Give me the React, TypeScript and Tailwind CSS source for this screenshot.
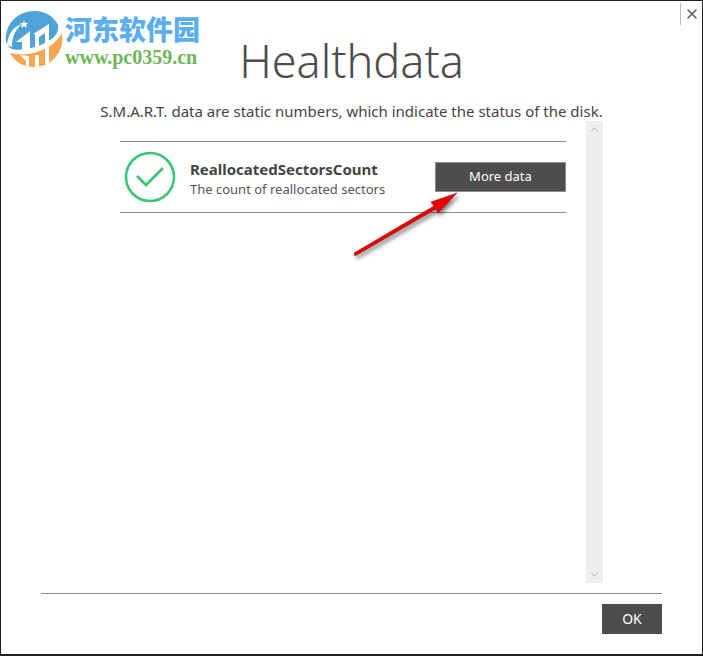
import React from "react";
import { X, ChevronUp, ChevronDown } from "lucide-react";

const SiteLogo = () => {
    return (
        <svg viewBox="0 0 60 60" className="h-[60px] w-[60px] shrink-0" aria-hidden="true">
            <path d="M1 33 C-1 16 12 2 29 2 C41 2 49 8 53 16 C55 27 43 33 33 37 C22 41 9 42 5 39 C3 37 2 35 1 33Z" fill="#4fa3d8" />
            <path d="M57 24 C60 42 47 58 29 58 C18 58 10 53 5 44 C27 49 49 39 57 24Z" fill="#f8a550" />
            {/* comet tail and star */}
            <path d="M2 36 C3 25 8 18 17 15 C10 21 7 28 7 38Z" fill="#fff" />
            <path d="M19 11 L20 14 L23 14 L21 16 L22 19 L19 17 L16 19 L17 16 L15 14 L18 14Z" fill="#fff" />
            {/* towers */}
            <path d="M11 33 L25 22 V41 H17 V33Z" fill="#fff" />
            <path d="M28 25 L44 15 V54 L40 56 V24 L34 28 V41 H30 V25Z" fill="#fff" />
            <path d="M15 46 L24 47 V60 H21 V52Z" fill="#fff" />
            <path d="M30 46 H34 V60 H30Z" fill="#fff" />
        </svg>
    );
};

const App = () => {
    return (
        <div className="relative flex min-h-screen flex-col border border-b-2 border-[#231f20] bg-white font-['Noto_Sans','Open_Sans',sans-serif] text-[#444444]">
            <div className="absolute top-2 left-1 flex items-center">
                <SiteLogo />
                <div className="font-bold">
                    <p className="font-['Noto_Sans_CJK_SC',sans-serif] text-[27px] leading-9 font-black text-[#5aaef0]">河东软件园</p>
                    <p className="font-['Liberation_Serif',serif] text-xl leading-5 text-[#6cb856]">www.pc0359.cn</p>
                </div>
            </div>

            <div className="flex h-6 justify-end pt-0.5">
                <button type="button" aria-label="Close" className="flex w-[22px] items-center justify-center border-l border-[#bbbbbb] text-[#555555]">
                    <X size={16} strokeWidth={2} />
                </button>
            </div>

            <main className="flex grow flex-col px-[99px]">
                <h1 className="mb-1 text-center text-[45px] leading-[72px] font-light text-[#4d4d4d]">Healthdata</h1>
                <p className="text-center text-[15px] leading-5 whitespace-nowrap">
                    S.M.A.R.T. data are static numbers, which indicate the status of the disk.
                </p>
                <div className="flex grow">
                    <div className="grow px-5 pt-5">
                        <div className="flex h-[72px] items-center border-y border-[#8c8c8c] pl-1">
                            <svg viewBox="0 0 52 52" className="h-[52px] w-[52px] shrink-0" fill="none" stroke="#3cc574">
                                <circle cx="26" cy="26" r="24" strokeWidth="2.6" />
                                <path d="M13 25 L22 34 L39 17" strokeWidth="2.8" />
                            </svg>
                            <div className="grow pt-1 pl-3.5">
                                <h2 className="text-[15px] leading-5 font-bold">ReallocatedSectorsCount</h2>
                                <p className="text-[13px] leading-5 text-[#555555]">The count of reallocated sectors</p>
                            </div>
                            <button type="button" className="h-[30px] w-[131px] border border-[#8c8c8c] bg-[#4d4d4d] text-[13px] text-white">
                                More data
                            </button>
                        </div>
                    </div>
                    <div className="flex w-[17px] flex-col items-center justify-between bg-[#eeeeee] py-0.5 text-[#c4c4c4]">
                        <ChevronUp size={13} />
                        <ChevronDown size={13} />
                    </div>
                </div>
            </main>

            <footer className="mx-10 mt-2.5 flex justify-end border-t border-[#8c8c8c] pt-2.5 pb-5">
                <button type="button" className="h-[30px] w-[60px] bg-[#4d4d4d] text-sm text-white">
                    OK
                </button>
            </footer>

            <svg viewBox="0 0 112 70" className="absolute top-[189px] left-[349px] h-[70px] w-28 drop-shadow-[2px_3px_2px_rgba(0,0,0,0.5)]" aria-hidden="true">
                <path d="M4 63 L84 16 L81 12 L107 3 L88 23 L86 19 L5 66Z" fill="#e60000" stroke="#a00000" strokeWidth="0.5" />
            </svg>
        </div>
    );
};

export default App;
